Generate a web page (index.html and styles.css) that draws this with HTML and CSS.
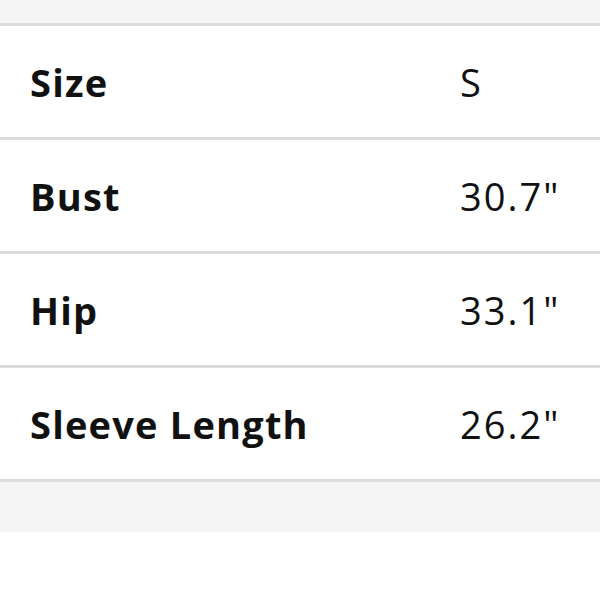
FILE: index.html
```html
<!DOCTYPE html>
<html>
<head>
<meta charset="utf-8">
<link rel="stylesheet" href="styles.css">
</head>
<body>
<div class="top-strip"></div>
<div class="table">
  <div class="row"><div class="label">Size</div><div class="value">S</div></div>
  <div class="row"><div class="label">Bust</div><div class="value">30.7"</div></div>
  <div class="row"><div class="label">Hip</div><div class="value">33.1"</div></div>
  <div class="row"><div class="label">Sleeve Length</div><div class="value">26.2"</div></div>
</div>
<div class="bottom-strip"></div>
</body>
</html>
```
FILE: styles.css
```css
html, body {
  margin: 0;
  padding: 0;
  background: #ffffff;
}
body {
  font-family: "Open Sans", "Liberation Sans", sans-serif;
  color: #111111;
}
.top-strip {
  height: 23px;
  background: #f5f5f5;
  border-bottom: 3px solid #dcdcdc;
}
.row {
  height: 111px;
  display: flex;
  align-items: center;
  border-bottom: 3px solid #dcdcdc;
}
.label {
  width: 430px;
  padding-left: 30px;
  font-size: 38px;
  font-weight: 700;
  letter-spacing: 1.2px;
}
.value {
  font-size: 38px;
  font-weight: 400;
  letter-spacing: 2px;
}
.bottom-strip {
  height: 50px;
  background: #f5f5f5;
}
```
